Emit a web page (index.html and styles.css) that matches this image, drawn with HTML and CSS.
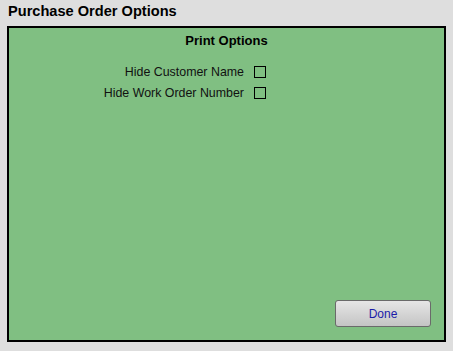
FILE: index.html
```html
<!DOCTYPE html>
<html lang="en">
<head>
  <meta charset="UTF-8">
  <title>Purchase Order Options</title>
  <link rel="stylesheet" href="styles.css">
</head>
<body>
  <h1 class="title">Purchase Order Options</h1>
  <div class="panel">
    <h2 class="section">Print Options</h2>
    <div class="options">
      <label class="option">
        <span class="optionText">Hide Customer Name</span>
        <input type="checkbox" class="check">
      </label>
      <label class="option">
        <span class="optionText">Hide Work Order Number</span>
        <input type="checkbox" class="check">
      </label>
    </div>
    <div class="actions">
      <button class="done">Done</button>
    </div>
  </div>
</body>
</html>
```

FILE: styles.css
```css
body {
	margin: 0;
	width: 453px;
	height: 351px;
	background: #dedede;
	font-family: "Liberation Sans", Arial, sans-serif;
	color: #000;
	display: flex;
	flex-direction: column;
}

.title {
	margin: 0;
	padding: 3px 8px 0 8px;
	height: 23px;
	font-size: 14.6px;
	font-weight: bold;
	line-height: 16px;
}

.panel {
	margin: 0 7px 0 7px;
	height: 316px;
	box-sizing: border-box;
	border: 2px solid #000;
	background: #80bf82;
	display: flex;
	flex-direction: column;
}

.section {
	margin: 0;
	padding-top: 5px;
	text-align: center;
	font-size: 13px;
	font-weight: bold;
	line-height: 15px;
}

.options {
	margin-top: 18px;
	display: flex;
	flex-direction: column;
	gap: 9px;
}

.option {
	display: flex;
	align-items: center;
	height: 12px;
	font-size: 12.4px;
}

.optionText {
	width: 235px;
	text-align: right;
	color: #111;
}

.check {
	-webkit-appearance: none;
	appearance: none;
	margin: 0 0 0 10px;
	width: 12px;
	height: 12px;
	box-sizing: border-box;
	border: 1px solid #000;
	background: transparent;
}

.actions {
	margin-top: auto;
	display: flex;
	justify-content: flex-end;
	padding: 0 13px 13px 0;
}

.done {
	width: 96px;
	height: 27px;
	border: 1px solid #6a6a6a;
	border-radius: 3px;
	background: linear-gradient(#e6e6e6, #c4c4c4);
	color: #1a1aa8;
	font-family: "Liberation Sans", Arial, sans-serif;
	font-size: 12px;
	padding: 0;
}
```
